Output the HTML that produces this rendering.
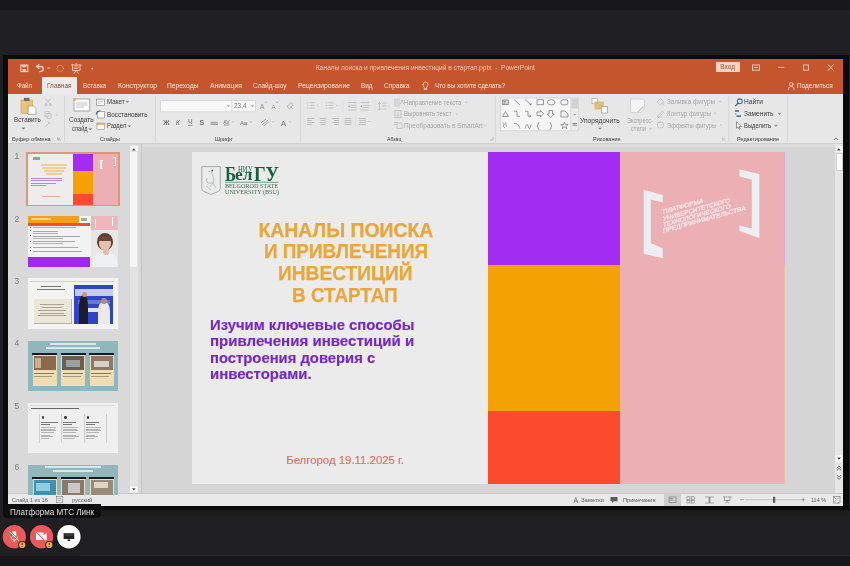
<!DOCTYPE html>
<html><head><meta charset="utf-8">
<style>
*{margin:0;padding:0;box-sizing:border-box}
html,body{width:850px;height:566px;overflow:hidden;background:#202024;font-family:"Liberation Sans",sans-serif;position:relative}
.a{position:absolute}
.t{position:absolute;white-space:pre;line-height:1}
svg{position:absolute;overflow:visible}
#root{position:absolute;left:0;top:0;width:850px;height:566px;overflow:hidden;filter:blur(0.5px)}
</style></head><body><div id="root">
<!-- top dark band -->
<div class="a" style="left:0;top:0;width:850px;height:9.5px;background:#18181c"></div>
<!-- window border -->
<div class="a" style="left:3px;top:54.5px;width:846px;height:456px;background:#0b0b0c"></div>
<div class="a" style="left:3px;top:510px;width:845px;height:6px;background:#1c1c1f"></div>
<!-- title bar + tabs -->
<div class="a" style="left:8px;top:59px;width:835px;height:35px;background:#c5552c"></div>
<!-- active tab -->
<div class="a" style="left:41.5px;top:77px;width:35.5px;height:17px;background:#ebebeb"></div>
<!-- ribbon body -->
<div class="a" style="left:8px;top:94px;width:835px;height:49px;background:#e7e7e7"></div>
<div class="a" style="left:8px;top:143px;width:835px;height:1px;background:#cfcfcf"></div>
<!-- main area -->
<div class="a" style="left:8px;top:144px;width:835px;height:350px;background:#d5d5d5"></div>
<!-- thumbnail panel -->
<div class="a" style="left:8px;top:144px;width:133px;height:350px;background:#d9d9d9"></div>
<div class="a" style="left:141px;top:144px;width:1px;height:350px;background:#c4c4c4"></div>
<div class="a" style="left:142px;top:144px;width:693px;height:2.5px;background:#dcdcdc"></div>
<!-- left scrollbar -->
<div class="a" style="left:129.5px;top:145px;width:8.5px;height:349px;background:#e3e3e3"></div>
<div class="a" style="left:130px;top:145.8px;width:7.5px;height:5.5px;background:#f4f4f4"></div>
<div class="a" style="left:130px;top:152px;width:7px;height:115px;background:#f5f5f5"></div>
<!-- right scrollbar -->
<div class="a" style="left:835px;top:144px;width:8px;height:350px;background:#e6e6e6"></div>
<div class="a" style="left:835.5px;top:145.5px;width:7px;height:6px;background:#f4f4f4"></div>
<div class="a" style="left:835.5px;top:152.5px;width:7px;height:18.5px;background:#fafafa;border:0.5px solid #d0d0d0"></div>
<!-- status bar -->
<div class="a" style="left:8px;top:493px;width:835px;height:1px;background:#c9c9c9"></div>
<div class="a" style="left:8px;top:494px;width:835px;height:12px;background:#e9e9e9"></div>


<!-- SLIDE -->
<div class="a" style="left:192px;top:152px;width:593px;height:331.5px;background:#ebebeb;overflow:hidden">
  <div class="a" style="left:296px;top:0;width:132px;height:113px;background:#a22cf1"></div>
  <div class="a" style="left:296px;top:113px;width:132px;height:146px;background:#f4a104"></div>
  <div class="a" style="left:296px;top:259px;width:132px;height:73px;background:#fc4a2e"></div>
  <div class="a" style="left:428px;top:0;width:164px;height:332px;background:#ecafb3"></div>
  <div class="a" style="left:592px;top:0;width:1px;height:113px;background:#d8aed6"></div>
  <div class="a" style="left:592px;top:113px;width:1px;height:219px;background:#eebfa8"></div>
</div>

<svg width="850" height="566" style="left:0;top:0" viewBox="0 0 850 566">
<g fill="none" stroke-linecap="square">
  <!-- title bar: save -->
  <rect x="20.8" y="65" width="7" height="6.6" stroke="#f5d0c2" stroke-width="1.1"/>
  <rect x="22.3" y="65" width="4" height="2.2" fill="#f5d0c2" stroke="none"/>
  <rect x="22.5" y="69" width="3.6" height="2.6" fill="#f5d0c2" stroke="none"/>
  <!-- undo -->
  <path d="M37,66.5 L40.5,66.5 Q43.5,66.8 43.3,69.2 Q43,71.5 40,71.6" stroke="#f5d0c2" stroke-width="1.3"/>
  <path d="M38.8,64.6 L36.6,66.6 L38.8,68.5" stroke="#f5d0c2" stroke-width="1.2"/>
  <path d="M47.8,68 h2" stroke="#f6cfc0" stroke-width="0.9"/>
  <!-- redo faded -->
  <circle cx="60.2" cy="68.4" r="3.2" stroke="#d98466" stroke-width="1"/>
  <!-- presentation -->
  <path d="M71.5,65 h9.5 M72.5,65 v5.5 h7.5 v-5.5 M76.2,70.5 l-2,2.8 M76.2,70.5 l2,2.8 M76.2,63.5 v1.5" stroke="#f5d0c2" stroke-width="0.9"/>
  <path d="M74,67 h4.5 M74,68.5 h3.5" stroke="#f6cfc0" stroke-width="0.7"/>
  <circle cx="92.2" cy="68.6" r="0.9" fill="#f6cfc0" stroke="none"/>
  <!-- window controls -->
  <rect x="752.5" y="65" width="7" height="5.2" stroke="#f5d0c2" stroke-width="0.9"/>
  <path d="M754.5,67.5 h3" stroke="#f5d0c2" stroke-width="0.9"/>
  <path d="M778.5,67.4 h5.3" stroke="#f5d0c2" stroke-width="0.9"/>
  <rect x="803.5" y="65" width="5" height="5.2" stroke="#f5d0c2" stroke-width="0.9"/>
  <path d="M828.3,64.8 l5,5.5 M833.3,64.8 l-5,5.5" stroke="#f5d0c2" stroke-width="0.9"/>
  <!-- lightbulb -->
  <path d="M423,84.5 a2.5,2.5 0 1 1 5,0 q0,1.5 -1.2,2.7 v1.3 h-2.6 v-1.3 q-1.2,-1.2 -1.2,-2.7 z M424.3,89.5 h2.4" stroke="#f5d0c2" stroke-width="0.8"/>
  <!-- person -->
  <circle cx="791.3" cy="84.3" r="1.8" stroke="#f5d0c2" stroke-width="0.9"/>
  <path d="M788.3,89.5 q0,-3.2 3,-3.2 q3,0 3,3.2" stroke="#f5d0c2" stroke-width="0.9"/>

  <!-- ribbon: paste -->
  <rect x="21" y="100" width="11.5" height="13.5" fill="#e8c37a" stroke="#c9a35a" stroke-width="0.6"/>
  <rect x="24" y="97.8" width="5.5" height="3.2" fill="#6f6f6f" stroke="none"/>
  <path d="M28.5,106 h5 l2.5,2.5 v6 h-7.5 z" fill="#fdfdfd" stroke="#8c8c8c" stroke-width="0.6"/>
  <path d="M22.2,128 l1.2,1.2 l1.2,-1.2 z" fill="#666" stroke="#666" stroke-width="0.4"/>
  <!-- cut copy painter faded -->
  <path d="M45.5,99 l5,5 M50.5,99 l-5,5" stroke="#b9b9b9" stroke-width="0.8"/>
  <circle cx="45.8" cy="105" r="1" stroke="#b9b9b9" stroke-width="0.7"/>
  <circle cx="50.2" cy="105" r="1" stroke="#b9b9b9" stroke-width="0.7"/>
  <rect x="45" y="111.5" width="4" height="5" stroke="#bdbdbd" stroke-width="0.7"/>
  <rect x="47" y="113.5" width="4" height="5" stroke="#bdbdbd" stroke-width="0.7"/>
  <path d="M56,115 h1.5" stroke="#bdbdbd" stroke-width="0.7"/>
  <path d="M45.5,126.5 l4,-4 M48,121.5 l2.5,2.5" stroke="#c2c2c2" stroke-width="1"/>
  <path d="M57.8,137.6 v2.4 h2.4 M58.6,139.2 l1.2,-1" stroke="#8a8a8a" stroke-width="0.6"/>
  <!-- separators -->
  <path d="M64.5,96 v45.5 M155.3,96 v45.5 M300.6,96 v45.5 M495.3,96 v45.5 M728.8,96 v45.5 M787.6,96 v45.5" stroke="#d2d2d2" stroke-width="0.8" stroke-linecap="butt"/>
  <!-- new slide -->
  <rect x="74" y="99" width="15.8" height="12" fill="#fafafa" stroke="#8a8a8a" stroke-width="0.7"/>
  <path d="M76.5,103 h10.5 M76.5,105 h10.5 M76.5,107 h7" stroke="#b0b0b0" stroke-width="0.7"/>
  <circle cx="74.6" cy="99.3" r="1.6" fill="#e6b45a" stroke="none"/>
  <path d="M89.2,128.8 l1.1,1.1 l1.1,-1.1 z" fill="#666" stroke="#666" stroke-width="0.4"/>
  <!-- layout / reset / section -->
  <rect x="96.5" y="99.2" width="8" height="6.2" fill="#fafafa" stroke="#7f7f7f" stroke-width="0.6"/>
  <path d="M98,101.5 h5 M98,103.3 h3" stroke="#a0a0a0" stroke-width="0.5"/>
  <path d="M126.3,101.6 l1,1 l1,-1 z" fill="#666" stroke="#666" stroke-width="0.4"/>
  <rect x="97.5" y="111.5" width="7" height="6.5" fill="#fafafa" stroke="#7f7f7f" stroke-width="0.6"/>
  <path d="M96.3,114 q0.5,-3 3.5,-3" stroke="#2e6fbf" stroke-width="1.1"/>
  <rect x="97" y="123" width="7.5" height="6.5" fill="#fafafa" stroke="#8f8f8f" stroke-width="0.6"/>
  <path d="M97,124 h7.5" stroke="#e49a4a" stroke-width="1.4"/>
  <path d="M128.4,125.9 l1,1 l1,-1 z" fill="#666" stroke="#666" stroke-width="0.4"/>
  <!-- font boxes -->
  <rect x="160.5" y="100.5" width="95" height="11.3" fill="#f8f8f8" stroke="#d0d0d0" stroke-width="0.7"/>
  <path d="M231.9,100.8 v10.7" stroke="#c4c4c4" stroke-width="0.6"/>
  <path d="M227.3,105.8 l1,1 l1,-1 z M251.3,105.8 l1,1 l1,-1 z" fill="#8a8a8a" stroke="#8a8a8a" stroke-width="0.4"/>
  <text x="259.7" y="109" font-size="7" fill="#8a8a8a" stroke="none" font-family="Liberation Sans">A</text>
  <text x="271.5" y="109" font-size="6" fill="#8a8a8a" stroke="none" font-family="Liberation Sans">A</text>
  <path d="M265.2,102.5 l0.8,-0.9 l0.8,0.9 M276.2,102 l0.7,0.8 l0.7,-0.8" stroke="#8a8a8a" stroke-width="0.5"/>
  <path d="M287.5,106.5 l3,-4 l2.5,2 l-3,4 z M290.5,107 l2,1.5" stroke="#a0a0a0" stroke-width="0.7"/>
  <!-- font row 2 -->
  <g font-family="Liberation Sans" fill="#707070" stroke="none" font-size="7" transform="translate(0,0.8)">
    <text x="163.3" y="124.3" font-weight="700">Ж</text>
    <text x="175.7" y="124.3" font-style="italic">К</text>
    <text x="187.9" y="123.6">Ч</text>
    <text x="199.5" y="124.3" font-weight="700">S</text>
    <text x="223.3" y="123.3" font-size="5">AV</text>
    <text x="240" y="124.3" font-size="6">Aa</text>
    <text x="280.8" y="124.8" font-size="8">A</text>
  </g>
  <path d="M188,125.4 h4.5 M210.8,122.3 h7 M224,125 h5.5" stroke="#7c7c7c" stroke-width="0.7" stroke-linecap="butt"/>
  <path d="M210.5,123.5 h7.5 v1.2 h-7.5 z" fill="#8a8a8a" stroke="none"/>
  <path d="M232.5,121.8 h1 M250.5,121.8 h1 M272.8,121.8 h1 M289.5,121.8 h1" stroke="#b0b0b0" stroke-width="0.7"/>
  <path d="M262.5,124.5 l5,-4 M261.5,122.5 l4,-3 M264,125.6 l4.5,-3.5" stroke="#9a9a9a" stroke-width="0.9"/>
  <path d="M270,118 v8" stroke="#d2d2d2" stroke-width="0.6"/>
  <!-- paragraph row 1 -->
<g transform="translate(0.5,3)">
  <g stroke="#b4b4b4" stroke-width="0.7" stroke-linecap="butt">
    <path d="M306.5,99.8 h1.2 M309,99.8 h5 M306.5,102.4 h1.2 M309,102.4 h5 M306.5,105 h1.2 M309,105 h5"/>
    <path d="M316.5,102.4 h1.2"/>
    <path d="M325.5,99.8 h1.2 M328,99.8 h5 M325.5,102.4 h1.2 M328,102.4 h5 M325.5,105 h1.2 M328,105 h5"/>
    <path d="M335.5,102.4 h1.2"/>
    <path d="M347.5,99.5 h8.5 M350,102.4 h6 M350,104.5 h6 M347.5,107 h8.5"/>
    <path d="M360,99.5 h8.5 M362.5,102.4 h6 M362.5,104.5 h6 M360,107 h8.5"/>
    <path d="M379,99.5 v7.5 M382,100 h4 M382,103 h4 M382,106 h4 M388,103 h1"/>
  </g>
  <path d="M348.2,102 l1.3,1.3 l-1.3,1.3 z M361.5,102 l-1.3,1.3 l1.3,1.3 z" fill="#6c8abf" stroke="none"/>
  <path d="M378,100.5 l1,-1.2 l1,1.2 M378,106 l1,1.2 l1,-1.2" stroke="#9a9a9a" stroke-width="0.6"/>
  <path d="M374.5,97 v11 M342.5,97 v11" stroke="#d8d8d8" stroke-width="0.6"/>
  </g>
  <!-- paragraph row 2 -->
  <g stroke="#b4b4b4" stroke-width="0.8" stroke-linecap="butt">
    <path d="M307,118.5 h7 M307,120.5 h5 M307,122.5 h7 M307,124.5 h5"/>
    <path d="M319.5,118.5 h7 M320.5,120.5 h5 M319.5,122.5 h7 M320.5,124.5 h5"/>
    <path d="M332,118.5 h7 M334,120.5 h5 M332,122.5 h7 M334,124.5 h5"/>
    <path d="M344.5,118.5 h7 M344.5,120.5 h7 M344.5,122.5 h7 M344.5,124.5 h7"/>
    <path d="M359,118.5 h7 M359,120.5 h7 M359,122.5 h7 M359,124.5 h7"/>
    <path d="M368.5,121.5 h1.2"/>
  </g>
  <path d="M355.5,116 v10" stroke="#d8d8d8" stroke-width="0.6"/>
  <!-- text direction etc icons -->
  <g stroke="#b8b8b8" stroke-width="0.7">
    <path d="M395,98.8 v7.5 M397,98.8 v7.5 M399,98.8 v7.5 M400.5,103.5 l1.5,-4 l1.5,4"/>
    <rect x="395" y="110.6" width="6" height="7.2"/>
    <path d="M398,112 v4.5 M396.8,115.3 l1.2,1.2 l1.2,-1.2"/>
    <rect x="397" y="123" width="5" height="5.5"/>
    <path d="M394.5,122.5 h3 M394.5,124.5 h2"/>
    <path d="M466,102.3 h1 M456.5,114.2 h1 M484.5,125.9 h1"/>
  </g>
  <!-- shapes gallery -->
  <rect x="500.5" y="98" width="70.5" height="32.8" fill="#f5f5f5" stroke="#d0d0d0" stroke-width="0.8"/>
  <rect x="571" y="98" width="7.3" height="32.8" fill="#ececec" stroke="#d0d0d0" stroke-width="0.6"/>
  <rect x="571.5" y="98.5" width="6.5" height="10" fill="#d2d2d2" stroke="none"/>
  <path d="M573.6,114.2 l1.1,1.3 l1.1,-1.3 z" fill="#555" stroke="none"/>
  <path d="M573,123.5 h3.5 M573,125.2 h3.5" stroke="#555" stroke-width="0.7"/>
  <g stroke="#6a6a6a" stroke-width="0.65" stroke-linecap="butt">
    <rect x="502.5" y="100" width="5.8" height="4.5" fill="#dadada"/>
    <path d="M503.5,101.5 h2.5 M503.5,103 h2"/>
    <path d="M514,99.5 l6,5.5"/>
    <path d="M525,99.5 l6,5.5 M529.5,104.8 h1.6 v-1.5"/>
    <rect x="537" y="99.8" width="6.5" height="5"/>
    <ellipse cx="551.2" cy="102.3" rx="3.8" ry="2.6"/>
    <rect x="561" y="99.8" width="6.8" height="5" rx="1.5"/>
    <path d="M502.5,116.5 l3,-5 l3,5 z"/>
    <path d="M514,111.2 h3 v5 h3"/>
    <path d="M525,111.2 h3 v5 h3 M529.6,115 l1.3,1.2 l-1.3,1.2"/>
    <path d="M537,112 h3.5 v-1.6 l3,3.3 l-3,3.3 v-1.6 h-3.5 z"/>
    <path d="M549,110.5 h3.5 v3.5 h1.7 l-3.5,3.5 l-3.5,-3.5 h1.8 z"/>
    <path d="M561,111 h4 l3,3 v3 h-7 z"/>
    <path d="M502.8,122.5 l1.5,1.5 l-1,2 l1.5,2 M505.5,122.5 l1,4"/>
    <path d="M514,123.5 q4,-1 6,5"/>
    <path d="M525,128.5 q2,-7 3.2,-2 q1.2,5 3,-2"/>
    <path d="M539.5,122.5 q-1.5,0 -1.5,1.5 v1.2 l-1,0.8 l1,0.8 v1.2 q0,1.5 1.5,1.5"/>
    <path d="M549.5,122.5 q1.5,0 1.5,1.5 v1.2 l1,0.8 l-1,0.8 v1.2 q0,1.5 -1.5,1.5"/>
    <path d="M564.5,122 l1.1,2.5 h2.6 l-2.1,1.6 l0.8,2.6 l-2.4,-1.6 l-2.4,1.6 l0.8,-2.6 l-2.1,-1.6 h2.6 z"/>
  </g>
  <!-- arrange -->
  <rect x="592" y="98.3" width="5.5" height="5.5" fill="#fafafa" stroke="#9a9a9a" stroke-width="0.6"/>
  <rect x="594.5" y="101.5" width="9.5" height="8" fill="#dcb56a" stroke="none" opacity="0.85"/>
  <rect x="601.5" y="106.5" width="6" height="6.5" fill="#fafafa" stroke="#8a8a8a" stroke-width="0.6"/>
  <path d="M599,128.3 l1,1 l1,-1 z" fill="#666" stroke="#666" stroke-width="0.4"/>
  <!-- quick styles faded -->
  <path d="M631,99 h11.5 q2,0 2,2 v7 l-3.5,4.5 h-10 z" fill="#f4f4f4" stroke="#c8c8c8" stroke-width="0.7"/>
  <path d="M638,112 l5,-5" stroke="#c0c0c0" stroke-width="1.2"/>
  <path d="M649.5,128.8 l1,1 l1,-1 z" fill="#bbb" stroke="#bbb" stroke-width="0.4"/>
  <!-- shape fill/outline/effects faded -->
  <g stroke="#bdbdbd" stroke-width="0.8">
    <path d="M657.5,101.5 l3,-3 l3,3 l-3,3 z M663,102.5 v2.5"/>
    <path d="M657.5,116 l5,-5 l1.2,1.2 l-5,5 z M657.5,117 h4"/>
    <rect x="657.5" y="122.2" width="6" height="5.5" rx="2"/>
    <path d="M719.5,101.4 h1 M714.5,113.2 h1 M720.5,125 h1"/>
    <path d="M722.4,137.6 v2.4 h2.4 M723.2,139.2 l1.2,-1"/>
  </g>
  <!-- editing -->
  <circle cx="739.8" cy="101.3" r="2.4" stroke="#2f6ab7" stroke-width="1.1"/>
  <path d="M738,103.2 l-2.4,2.5" stroke="#2f6ab7" stroke-width="1.3"/>
  <g stroke="none">
    <rect x="735" y="110.2" width="4" height="1.6" fill="#666"/>
    <rect x="736.5" y="115.3" width="4.5" height="1.6" fill="#2f6ab7"/>
    <path d="M734.8,113.5 h2 l-1,1.2 z" fill="#777"/>
  </g>
  <path d="M778.5,113.6 l1,1 l1,-1 z M775,125.4 l1,1 l1,-1 z" fill="#666" stroke="#666" stroke-width="0.4"/>
  <path d="M736.5,122.3 v6 l1.5,-1.4 l1.3,2.6 l0.9,-0.5 l-1.2,-2.4 h2 z" fill="#fafafa" stroke="#555" stroke-width="0.6"/>
  <path d="M834.2,139.6 l1.8,-1.8 l1.8,1.8" stroke="#666" stroke-width="0.8"/>
  <path d="M396.8,137.6 v0 M493,137.6 v2.4 h-2.4" stroke="#9a9a9a" stroke-width="0.6"/>

  <!-- left scrollbar arrows -->
  <path d="M132,150.5 l1.8,-2.2 l1.8,2.2 z" fill="#444" stroke="none"/>
  <rect x="130" y="486.5" width="7.5" height="5.5" fill="#fafafa" stroke="none"/>
  <path d="M132,488.3 l1.8,2.2 l1.8,-2.2 z" fill="#444" stroke="none"/>
  <!-- right scrollbar -->
  <path d="M837,150.5 l1.8,-2.2 l1.8,2.2 z" fill="#444" stroke="none"/>
  <rect x="835.5" y="455.5" width="7" height="6" fill="#fafafa"/>
  <path d="M837.2,457.5 l1.8,2.2 l1.8,-2.2 z" fill="#444"/>
  <path d="M837.2,467.8 l1.8,-1.6 l1.8,1.6 M837.2,470 l1.8,-1.6 l1.8,1.6 M837.2,475.5 l1.8,1.6 l1.8,-1.6 M837.2,477.7 l1.8,1.6 l1.8,-1.6" fill="none" stroke="#444" stroke-width="0.7"/>
  <!-- status bar icons -->
  <rect x="56.3" y="496.3" width="6.5" height="6.5" stroke="#7a7a7a" stroke-width="0.6"/>
  <path d="M58,498.5 h3 M58,500.5 h3" stroke="#7a7a7a" stroke-width="0.5"/>
  <path d="M574,502.5 l1.8,-5 l1.8,5 M574.6,501 h2.4" stroke="#6a6a6a" stroke-width="0.7"/>
  <path d="M610.5,497 h7 v4.2 h-3.5 l-2,1.8 v-1.8 h-1.5 z" fill="#5a5a5a" stroke="none"/>
  <rect x="664" y="494" width="17" height="11.8" fill="#cdcdcd" stroke="none"/>
  <g stroke="#777" stroke-width="0.6">
    <rect x="669" y="497" width="7" height="5.5"/>
    <path d="M670,498.5 h2.5 M670,500 h2.5"/>
    <rect x="687" y="496.8" width="3" height="2.5"/><rect x="691.5" y="496.8" width="3" height="2.5"/>
    <rect x="687" y="500.5" width="3" height="2.5"/><rect x="691.5" y="500.5" width="3" height="2.5"/>
    <path d="M705.5,497 h3.5 v6 h-3.5 M713.5,497 h-3.5 v6 h3.5 M709.5,497 v6"/>
    <path d="M723.5,497 h7.5 M724.5,497 v3.5 h5.5 v-3.5 M727.2,500.5 l-1.2,2.5 M727.2,500.5 l1.2,2.5"/>
    <path d="M740.5,499.8 h3 M801.5,499.8 h3.5 M803.2,498 v3.5"/>
    <rect x="833.5" y="496.5" width="6.5" height="6.5"/>
    <path d="M834.5,497.5 l1.5,1.5 M839,497.5 l-1.5,1.5 M834.5,502 l1.5,-1.5 M839,502 l-1.5,1.5"/>
  </g>
  <path d="M746,499.8 h54.5" stroke="#a8a8a8" stroke-width="0.6"/>
  <rect x="773" y="496.8" width="2.2" height="6" fill="#5a5a5a" stroke="none"/>
</g>
</svg>
<!-- Вход button -->
<div class="a" style="left:715.5px;top:62.3px;width:24.2px;height:9.7px;background:#f6d3c4"></div>
<!-- THUMB 1 -->
<div class="a" style="left:26.2px;top:152.3px;width:93.6px;height:54px;background:#df957a"></div>
<div class="a" style="left:28px;top:154px;width:90px;height:50.5px;background:#ededed;overflow:hidden">
  <div class="a" style="left:45.4px;top:0;width:19.7px;height:17.2px;background:#a22cf1"></div>
  <div class="a" style="left:45.4px;top:17.2px;width:19.7px;height:22.8px;background:#f4a104"></div>
  <div class="a" style="left:45.4px;top:40px;width:19.7px;height:10.5px;background:#fc4a2e"></div>
  <div class="a" style="left:65.1px;top:0;width:25px;height:50.5px;background:#ecafb3"></div>
  <div class="a" style="left:72px;top:6px;width:1.5px;height:9px;background:#f4f4f4"></div>
  <div class="a" style="left:72px;top:6px;width:3px;height:1.2px;background:#f4f4f4"></div>
  <div class="a" style="left:72px;top:14px;width:3px;height:1.2px;background:#f4f4f4"></div>
  <div class="a" style="left:86.5px;top:3px;width:1.5px;height:9px;background:#f4f4f4"></div>
  <div class="a" style="left:85px;top:3px;width:3px;height:1.2px;background:#f4f4f4"></div>
  <div class="a" style="left:85px;top:11px;width:3px;height:1.2px;background:#f4f4f4"></div>
  <div class="a" style="left:5px;top:2.5px;width:7px;height:3px;background:#5a8a70;opacity:.7"></div>
  <div class="a" style="left:13px;top:10px;width:26px;height:1.5px;background:#f2cf90"></div>
  <div class="a" style="left:14px;top:13px;width:24px;height:1.5px;background:#f2cf90"></div>
  <div class="a" style="left:16px;top:16px;width:20px;height:1.5px;background:#f2cf90"></div>
  <div class="a" style="left:18px;top:19px;width:16px;height:1.5px;background:#f2cf90"></div>
  <div class="a" style="left:2.5px;top:23.5px;width:31px;height:1.3px;background:#b58ae6"></div>
  <div class="a" style="left:2.5px;top:26px;width:31px;height:1.3px;background:#b58ae6"></div>
  <div class="a" style="left:2.5px;top:28.5px;width:25px;height:1.3px;background:#b58ae6"></div>
  <div class="a" style="left:2.5px;top:31px;width:15px;height:1.3px;background:#b58ae6"></div>
  <div class="a" style="left:14px;top:42px;width:18px;height:1px;background:#e8b0a0"></div>
</div>
<!-- THUMB 2 -->
<div class="a" style="left:28px;top:216px;width:90px;height:50.5px;background:#f2f2f2;overflow:hidden">
  <div class="a" style="left:0;top:0;width:51px;height:6.5px;background:#f2a019"></div>
  <div class="a" style="left:2.5px;top:2px;width:20px;height:2.2px;background:#fbe0b8;opacity:.75"></div>
  <div class="a" style="left:51px;top:0;width:11px;height:6.5px;background:#f4f4f4"></div>
  <div class="a" style="left:53px;top:2px;width:6px;height:2.5px;background:#9ab0a4"></div>
  <div class="a" style="left:0;top:6.5px;width:62px;height:3px;background:#f0502e"></div>
  <div class="a" style="left:62.5px;top:0;width:27.5px;height:14px;background:#efb6bb"></div>
  <div class="a" style="left:66.5px;top:2.5px;width:1.2px;height:9px;background:#fafafa"></div>
  <div class="a" style="left:83.5px;top:1px;width:1.2px;height:9px;background:#fafafa"></div>
  <div class="a" style="left:62.5px;top:14px;width:27.5px;height:36.5px;background:#e9e7e6"></div>
  <div class="a" style="left:68.6px;top:16.7px;width:16px;height:17px;border-radius:50% 50% 45% 45%;background:#5e4032"></div>
  <div class="a" style="left:71px;top:21px;width:12.4px;height:13px;border-radius:45% 45% 50% 50%;background:#e6c2ac"></div>
  <div class="a" style="left:71px;top:21px;width:12.4px;height:3.5px;border-radius:45% 45% 0 0;background:#6a4838"></div>
  <div class="a" style="left:65px;top:37px;width:24px;height:14px;border-radius:45% 45% 0 0;background:#eef0f4"></div>
  <div class="a" style="left:75px;top:33px;width:6px;height:6px;border-radius:40%;background:#e2bca6"></div>
  <g></g>
  <div class="a" style="left:2.3px;top:11px;width:1.2px;height:1.2px;background:#666"></div>
  <div class="a" style="left:5px;top:11.3px;width:43px;height:.8px;background:#a8adb8"></div>
  <div class="a" style="left:2.3px;top:14.2px;width:1.2px;height:1.2px;background:#666"></div>
  <div class="a" style="left:5px;top:14.5px;width:25px;height:.8px;background:#a8a8a8"></div>
  <div class="a" style="left:5px;top:16.5px;width:25px;height:.8px;background:#b4b4b4"></div>
  <div class="a" style="left:2.3px;top:19.2px;width:1.2px;height:1.2px;background:#666"></div>
  <div class="a" style="left:5px;top:19.5px;width:47px;height:.8px;background:#a8a8a8"></div>
  <div class="a" style="left:5px;top:21.5px;width:30px;height:.8px;background:#b4b4b4"></div>
  <div class="a" style="left:2.3px;top:24.8px;width:1.2px;height:1.2px;background:#666"></div>
  <div class="a" style="left:5px;top:25px;width:42px;height:.8px;background:#a8a8a8"></div>
  <div class="a" style="left:5px;top:27px;width:30px;height:.8px;background:#b4b4b4"></div>
  <div class="a" style="left:2.3px;top:30.7px;width:1.2px;height:1.2px;background:#666"></div>
  <div class="a" style="left:5px;top:31px;width:45px;height:.8px;background:#a8a8a8"></div>
  <div class="a" style="left:2.3px;top:34.2px;width:1.2px;height:1.2px;background:#666"></div>
  <div class="a" style="left:5px;top:34.5px;width:49px;height:.8px;background:#a8a8a8"></div>
  <div class="a" style="left:0;top:40.5px;width:62px;height:10px;background:#a029f0"></div>
</div>
<!-- THUMB 3 -->
<div class="a" style="left:28px;top:278.3px;width:90px;height:50.5px;background:#f3f3f1;overflow:hidden">
  <div class="a" style="left:2px;top:2.5px;width:84px;height:.8px;background:#d0d0d0"></div>
  <div class="a" style="left:13px;top:8px;width:20px;height:1px;background:#777"></div>
  <div class="a" style="left:9px;top:10.8px;width:28px;height:1px;background:#777"></div>
  <div class="a" style="left:5.6px;top:20.9px;width:38px;height:25px;background:#b8b4a2"></div>
  <div class="a" style="left:5.6px;top:20.9px;width:37px;height:24px;background:#ebe7d7"></div>
  <div class="a" style="left:12px;top:26px;width:24px;height:1px;background:#aaa59a"></div>
  <div class="a" style="left:14px;top:28.5px;width:20px;height:1px;background:#aaa59a"></div>
  <div class="a" style="left:10px;top:32px;width:28px;height:1px;background:#aaa59a"></div>
  <div class="a" style="left:12px;top:34.5px;width:24px;height:1px;background:#aaa59a"></div>
  <div class="a" style="left:10px;top:37px;width:28px;height:1px;background:#aaa59a"></div>
  <div class="a" style="left:46.4px;top:6.7px;width:39px;height:39px;background:#2f45c9;overflow:hidden">
    <div class="a" style="left:1px;top:4px;width:38px;height:7px;background:#dfe3f7;opacity:.85"></div>
    <div class="a" style="left:4px;top:15px;width:32px;height:4px;background:#8c9ce0;opacity:.6"></div>
    <div class="a" style="left:5px;top:10px;width:9px;height:30px;border-radius:40% 40% 0 0;background:#1c1c2a"></div>
    <div class="a" style="left:8px;top:7px;width:5px;height:5px;border-radius:50%;background:#c89a80"></div>
    <div class="a" style="left:24px;top:17px;width:12px;height:22px;border-radius:40% 40% 0 0;background:#ece8e6"></div>
    <div class="a" style="left:27px;top:13px;width:6px;height:6px;border-radius:50%;background:#b08a70"></div>
    <div class="a" style="left:14px;top:23px;width:14px;height:4px;background:#e0e4f0"></div>
  </div>
</div>
<!-- THUMB 4 -->
<div class="a" style="left:28px;top:340.5px;width:90px;height:50.5px;background:#91b6bb;overflow:hidden">
  <div class="a" style="left:22px;top:2.6px;width:46px;height:2px;background:#d8e8ea"></div>
  <div class="a" style="left:18px;top:6px;width:54px;height:2px;background:#d8e8ea"></div>
  <div class="a" style="left:4px;top:12px;width:25px;height:2px;background:#1a1a1a"></div>
  <div class="a" style="left:32.5px;top:12px;width:25px;height:2px;background:#1a1a1a"></div>
  <div class="a" style="left:61px;top:12px;width:25px;height:2px;background:#1a1a1a"></div>
  <div class="a" style="left:4.5px;top:14px;width:24px;height:31px;background:#eedcb2"></div>
  <div class="a" style="left:33px;top:14px;width:24px;height:31px;background:#eedcb2"></div>
  <div class="a" style="left:61.5px;top:14px;width:24px;height:31px;background:#eedcb2"></div>
  <div class="a" style="left:5.5px;top:15px;width:22px;height:14px;background:#8a6a4a"></div>
  <div class="a" style="left:34px;top:15px;width:22px;height:14px;background:#6a5e50"></div>
  <div class="a" style="left:62.5px;top:15px;width:22px;height:14px;background:#8c7a66"></div>
  <div class="a" style="left:7px;top:17px;width:6px;height:10px;background:#c8b090"></div>
  <div class="a" style="left:38px;top:19px;width:14px;height:7px;background:#9aa0a0"></div>
  <div class="a" style="left:66px;top:20px;width:15px;height:6px;background:#d8d0c8"></div>
  <div class="a" style="left:6px;top:32px;width:20px;height:1px;background:#8a7a5a"></div>
  <div class="a" style="left:6px;top:35px;width:18px;height:1px;background:#a89a7a"></div>
  <div class="a" style="left:35px;top:32px;width:20px;height:1px;background:#8a7a5a"></div>
  <div class="a" style="left:35px;top:35px;width:18px;height:1px;background:#a89a7a"></div>
  <div class="a" style="left:63px;top:32px;width:20px;height:1px;background:#8a7a5a"></div>
  <div class="a" style="left:63px;top:35px;width:18px;height:1px;background:#a89a7a"></div>
</div>
<!-- THUMB 5 -->
<div class="a" style="left:28px;top:402.7px;width:90px;height:50.5px;background:#efefef;overflow:hidden">
  <div class="a" style="left:2px;top:2.3px;width:84px;height:.7px;background:#dadada"></div>
  <div class="a" style="left:3px;top:5.3px;width:48px;height:1.1px;background:#666"></div>
  <div class="a" style="left:10.5px;top:11.8px;width:.7px;height:28.5px;background:#cfcfcf"></div>
  <div class="a" style="left:32.8px;top:11.8px;width:.7px;height:28.5px;background:#cfcfcf"></div>
  <div class="a" style="left:55.6px;top:11.8px;width:.7px;height:28.5px;background:#cfcfcf"></div>
  <div class="a" style="left:77.9px;top:11.8px;width:.7px;height:28.5px;background:#cfcfcf"></div>
  <div class="a" style="left:13.5px;top:13.5px;width:2.8px;height:2.6px;border-radius:50%;background:#3a3a3a"></div>
  <div class="a" style="left:13.0px;top:19.2px;width:17px;height:1px;background:#777"></div>
  <div class="a" style="left:13.0px;top:21.3px;width:9px;height:1px;background:#777"></div>
  <div class="a" style="left:13.0px;top:24.8px;width:15px;height:.7px;background:#b4b4b4"></div>
  <div class="a" style="left:13.0px;top:26.3px;width:14px;height:.7px;background:#b4b4b4"></div>
  <div class="a" style="left:13.0px;top:27.8px;width:15px;height:.7px;background:#b4b4b4"></div>
  <div class="a" style="left:13.0px;top:29.3px;width:13px;height:.7px;background:#b4b4b4"></div>
  <div class="a" style="left:13.0px;top:32.0px;width:9px;height:.7px;background:#b4b4b4"></div>
  <div class="a" style="left:13.0px;top:33.5px;width:12px;height:.7px;background:#b4b4b4"></div>
  <div class="a" style="left:13.0px;top:35.0px;width:8px;height:.7px;background:#b4b4b4"></div>
  <div class="a" style="left:35.8px;top:13.5px;width:2.8px;height:2.6px;border-radius:50%;background:#3a3a3a"></div>
  <div class="a" style="left:35.3px;top:19.2px;width:13px;height:1px;background:#777"></div>
  <div class="a" style="left:35.3px;top:21.3px;width:9px;height:1px;background:#777"></div>
  <div class="a" style="left:35.3px;top:24.8px;width:15px;height:.7px;background:#b4b4b4"></div>
  <div class="a" style="left:35.3px;top:26.3px;width:14px;height:.7px;background:#b4b4b4"></div>
  <div class="a" style="left:35.3px;top:27.8px;width:15px;height:.7px;background:#b4b4b4"></div>
  <div class="a" style="left:35.3px;top:29.3px;width:13px;height:.7px;background:#b4b4b4"></div>
  <div class="a" style="left:35.3px;top:32.0px;width:13px;height:.7px;background:#b4b4b4"></div>
  <div class="a" style="left:35.3px;top:33.5px;width:16px;height:.7px;background:#b4b4b4"></div>
  <div class="a" style="left:35.3px;top:35.0px;width:12px;height:.7px;background:#b4b4b4"></div>
  <div class="a" style="left:58.6px;top:13.5px;width:2.8px;height:2.6px;border-radius:50%;background:#3a3a3a"></div>
  <div class="a" style="left:58.1px;top:19.2px;width:13px;height:1px;background:#777"></div>
  <div class="a" style="left:58.1px;top:21.3px;width:9px;height:1px;background:#777"></div>
  <div class="a" style="left:58.1px;top:24.8px;width:15px;height:.7px;background:#b4b4b4"></div>
  <div class="a" style="left:58.1px;top:26.3px;width:14px;height:.7px;background:#b4b4b4"></div>
  <div class="a" style="left:58.1px;top:27.8px;width:15px;height:.7px;background:#b4b4b4"></div>
  <div class="a" style="left:58.1px;top:29.3px;width:13px;height:.7px;background:#b4b4b4"></div>
  <div class="a" style="left:58.1px;top:32.0px;width:9px;height:.7px;background:#b4b4b4"></div>
  <div class="a" style="left:58.1px;top:33.5px;width:12px;height:.7px;background:#b4b4b4"></div>
  <div class="a" style="left:58.1px;top:35.0px;width:8px;height:.7px;background:#b4b4b4"></div>
</div>
<!-- THUMB 6 -->
<div class="a" style="left:28px;top:464.8px;width:90px;height:30px;background:#91b6bb;overflow:hidden">
  <div class="a" style="left:17px;top:1.6px;width:56px;height:2px;background:#d8e8ea"></div>
  <div class="a" style="left:25px;top:5px;width:40px;height:2px;background:#d8e8ea"></div>
  <div class="a" style="left:4px;top:12px;width:25px;height:2px;background:#1a1a1a"></div>
  <div class="a" style="left:32.5px;top:12px;width:25px;height:2px;background:#1a1a1a"></div>
  <div class="a" style="left:61px;top:12px;width:25px;height:2px;background:#1a1a1a"></div>
  <div class="a" style="left:4.5px;top:14px;width:24px;height:16px;background:#eedcb2"></div>
  <div class="a" style="left:33px;top:14px;width:24px;height:16px;background:#eedcb2"></div>
  <div class="a" style="left:61.5px;top:14px;width:24px;height:16px;background:#eedcb2"></div>
  <div class="a" style="left:5.5px;top:15px;width:22px;height:15px;background:#3f8fb0"></div>
  <div class="a" style="left:34px;top:15px;width:22px;height:15px;background:#8a7a6a"></div>
  <div class="a" style="left:62.5px;top:15px;width:22px;height:15px;background:#9a8a78"></div>
  <div class="a" style="left:8px;top:18px;width:14px;height:8px;background:#8ad0e0"></div>
  <div class="a" style="left:40px;top:18px;width:12px;height:10px;background:#c8c8c8"></div>
  <div class="a" style="left:66px;top:17px;width:14px;height:6px;background:#ddd4c4"></div>
</div>
<!-- bracket graphic on slide -->
<svg width="850" height="566" style="left:0;top:0" viewBox="0 0 850 566">
  <polygon points="643.7,189.8 662.8,195 662.8,202.5 650.8,199.5 650.8,243 662.8,248.4 662.8,258.2 643.7,253.7" fill="#eceef0"/>
  <polygon points="739.3,169.3 759.3,174 759.3,238.2 739.3,230.7 739.3,225.4 751.8,228.4 751.8,179.5 739.3,176.5" fill="#eceef0"/>
  <!-- shield -->
  <path d="M201.8,166.6 L220.3,166.6 L220.3,188.5 Q220.3,191 217,192 L211,194.4 L205,192 Q201.8,191 201.8,188.5 Z" fill="none" stroke="#9aa39e" stroke-width="0.9"/>
  <path d="M208,172 q3,-2 4,1 l1,4 q2,3 0,6 l-3,4 M207,178 q-2,3 1,5 q3,1 5,-1 M206,186 l5,4 M213,183 l3,5" fill="none" stroke="#a9b0ac" stroke-width="0.7"/>
  <circle cx="212.3" cy="170.5" r="0.9" fill="#555"/>
  <line x1="225" y1="182.3" x2="278.5" y2="182.3" stroke="#4f7a62" stroke-width="0.7"/>
</svg>
<div class="t" style="left:0;top:0;transform-origin:0 0;"></div>

<!-- label -->
<div class="a" style="left:3px;top:504px;width:97.5px;height:13.8px;background:#0e0e10;border-radius:0 0 4px 4px"></div>
<!-- buttons -->
<svg width="850" height="566" style="left:0;top:0" viewBox="0 0 850 566">
  <circle cx="14.3" cy="536.7" r="12.6" fill="#19191c"/>
  <circle cx="41.6" cy="536.7" r="12.6" fill="#19191c"/>
  <circle cx="68.9" cy="536.7" r="12.6" fill="#19191c"/>
  <circle cx="14.3" cy="536.7" r="11.7" fill="#ea5a5a"/>
  <circle cx="41.6" cy="536.7" r="11.7" fill="#ea5a5a"/>
  <circle cx="68.9" cy="536.7" r="11.7" fill="#ffffff"/>
  <!-- mic off -->
  <rect x="12.3" y="531" width="4" height="6.5" rx="2" fill="#ffffff" opacity="0.95"/>
  <path d="M10.8,536.5 q0,3.5 3.5,3.5 q3.5,0 3.5,-3.5 M14.3,540 v2" stroke="#ffffff" stroke-width="0.9" fill="none"/>
  <path d="M9.5,531.5 l9.5,9.5" stroke="#ea5a5a" stroke-width="2"/>
  <path d="M9.5,531.5 l9.5,9.5" stroke="#ffffff" stroke-width="0.9"/>
  <!-- camera off -->
  <path d="M36,532.5 h7.5 v7.5 h-7.5 z M43.5,535 l3.2,-2 v7.5 l-3.2,-2 z" fill="#ffffff"/>
  <path d="M36,531.5 l9.5,9.5" stroke="#ea5a5a" stroke-width="1.6"/>
  <path d="M36.5,531.5 l9,9" stroke="#ffffff" stroke-width="0.7"/>
  <!-- badges -->
  <circle cx="22.2" cy="544.9" r="4" fill="#1b1b1e"/>
  <circle cx="22.2" cy="544.9" r="3.1" fill="#f2b134"/>
  <path d="M22.2,542.6 v2.6 M22.2,546.4 v0.8" stroke="#3a2a10" stroke-width="1"/>
  <circle cx="49.3" cy="544.9" r="4" fill="#1b1b1e"/>
  <circle cx="49.3" cy="544.9" r="3.1" fill="#f2b134"/>
  <path d="M49.3,542.6 v2.6 M49.3,546.4 v0.8" stroke="#3a2a10" stroke-width="1"/>
  <!-- screen icon -->
  <rect x="63.6" y="533.2" width="10.6" height="5.8" fill="#222"/>
  <path d="M64.5,535 h8.8" stroke="#777" stroke-width="0.5"/>
  <rect x="67.6" y="539.4" width="2.6" height="1.6" fill="#222"/>
</svg>
<!-- bottom band -->
<div class="a" style="left:0;top:556px;width:850px;height:10px;background:#17171b"></div>
<div class="a" style="left:80px;top:555px;width:770px;height:1px;background:#2c2729"></div>
<div class="t" style="left:316.00px;top:64.94px;font-size:6.60px;font-weight:400;color:#f1c7b8;font-family:'Liberation Sans', sans-serif;">Каналы поиска и привлечения инвестиций в стартап.pptx  -  PowerPoint</div>
<div class="t" style="left:720.30px;top:64.14px;font-size:6.60px;font-weight:400;color:#a4553c;font-family:'Liberation Sans', sans-serif;">Вход</div>
<div class="t" style="left:17.00px;top:83.03px;font-size:6.80px;font-weight:400;color:#fbe6de;font-family:'Liberation Sans', sans-serif;transform:scaleX(0.8972);transform-origin:0 0;">Файл</div>
<div class="t" style="left:46.80px;top:83.03px;font-size:6.80px;font-weight:400;color:#8a4e3c;font-family:'Liberation Sans', sans-serif;transform:scaleX(0.9466);transform-origin:0 0;">Главная</div>
<div class="t" style="left:83.00px;top:83.03px;font-size:6.80px;font-weight:400;color:#fbe6de;font-family:'Liberation Sans', sans-serif;transform:scaleX(0.9100);transform-origin:0 0;">Вставка</div>
<div class="t" style="left:117.60px;top:83.03px;font-size:6.80px;font-weight:400;color:#fbe6de;font-family:'Liberation Sans', sans-serif;transform:scaleX(1.0059);transform-origin:0 0;">Конструктор</div>
<div class="t" style="left:167.00px;top:83.03px;font-size:6.80px;font-weight:400;color:#fbe6de;font-family:'Liberation Sans', sans-serif;transform:scaleX(0.9845);transform-origin:0 0;">Переходы</div>
<div class="t" style="left:210.00px;top:83.03px;font-size:6.80px;font-weight:400;color:#fbe6de;font-family:'Liberation Sans', sans-serif;">Анимация</div>
<div class="t" style="left:253.00px;top:83.03px;font-size:6.80px;font-weight:400;color:#fbe6de;font-family:'Liberation Sans', sans-serif;transform:scaleX(0.9531);transform-origin:0 0;">Слайд-шоу</div>
<div class="t" style="left:297.50px;top:83.03px;font-size:6.80px;font-weight:400;color:#fbe6de;font-family:'Liberation Sans', sans-serif;transform:scaleX(0.9884);transform-origin:0 0;">Рецензирование</div>
<div class="t" style="left:361.00px;top:83.03px;font-size:6.80px;font-weight:400;color:#fbe6de;font-family:'Liberation Sans', sans-serif;transform:scaleX(0.9266);transform-origin:0 0;">Вид</div>
<div class="t" style="left:384.00px;top:83.03px;font-size:6.80px;font-weight:400;color:#fbe6de;font-family:'Liberation Sans', sans-serif;transform:scaleX(0.9522);transform-origin:0 0;">Справка</div>
<div class="t" style="left:435.00px;top:83.03px;font-size:6.80px;font-weight:400;color:#fbe6de;font-family:'Liberation Sans', sans-serif;transform:scaleX(0.9312);transform-origin:0 0;">Что вы хотите сделать?</div>
<div class="t" style="left:797.00px;top:83.43px;font-size:6.80px;font-weight:400;color:#fdeae2;font-family:'Liberation Sans', sans-serif;transform:scaleX(0.9507);transform-origin:0 0;">Поделиться</div>
<div class="t" style="left:13.60px;top:117.14px;font-size:6.60px;font-weight:400;color:#3c3c3c;font-family:'Liberation Sans', sans-serif;transform:scaleX(0.9544);transform-origin:0 0;">Вставить</div>
<div class="t" style="left:12.40px;top:136.06px;font-size:6.00px;font-weight:400;color:#383838;font-family:'Liberation Sans', sans-serif;transform:scaleX(0.9517);transform-origin:0 0;">Буфер обмена</div>
<div class="t" style="left:68.90px;top:117.14px;font-size:6.60px;font-weight:400;color:#3c3c3c;font-family:'Liberation Sans', sans-serif;transform:scaleX(0.9848);transform-origin:0 0;">Создать</div>
<div class="t" style="left:72.00px;top:126.14px;font-size:6.60px;font-weight:400;color:#3c3c3c;font-family:'Liberation Sans', sans-serif;transform:scaleX(0.8442);transform-origin:0 0;">слайд</div>
<div class="t" style="left:106.50px;top:99.14px;font-size:6.60px;font-weight:400;color:#3c3c3c;font-family:'Liberation Sans', sans-serif;transform:scaleX(0.9369);transform-origin:0 0;">Макет</div>
<div class="t" style="left:106.80px;top:111.54px;font-size:6.60px;font-weight:400;color:#3c3c3c;font-family:'Liberation Sans', sans-serif;transform:scaleX(0.9607);transform-origin:0 0;">Восстановить</div>
<div class="t" style="left:106.80px;top:123.34px;font-size:6.60px;font-weight:400;color:#3c3c3c;font-family:'Liberation Sans', sans-serif;transform:scaleX(0.8801);transform-origin:0 0;">Раздел</div>
<div class="t" style="left:99.80px;top:136.06px;font-size:6.00px;font-weight:400;color:#383838;font-family:'Liberation Sans', sans-serif;transform:scaleX(0.8820);transform-origin:0 0;">Слайды</div>
<div class="t" style="left:233.50px;top:103.14px;font-size:6.60px;font-weight:400;color:#777;font-family:'Liberation Sans', sans-serif;transform:scaleX(0.9730);transform-origin:0 0;">23,4</div>
<div class="t" style="left:215.00px;top:135.66px;font-size:6.00px;font-weight:400;color:#383838;font-family:'Liberation Sans', sans-serif;transform:scaleX(0.9118);transform-origin:0 0;">Шрифт</div>
<div class="t" style="left:403.50px;top:99.54px;font-size:6.60px;font-weight:400;color:#a6a6a6;font-family:'Liberation Sans', sans-serif;transform:scaleX(0.9190);transform-origin:0 0;">Направление текста</div>
<div class="t" style="left:403.50px;top:111.34px;font-size:6.60px;font-weight:400;color:#a6a6a6;font-family:'Liberation Sans', sans-serif;transform:scaleX(0.9239);transform-origin:0 0;">Выровнять текст</div>
<div class="t" style="left:403.50px;top:123.04px;font-size:6.60px;font-weight:400;color:#a6a6a6;font-family:'Liberation Sans', sans-serif;transform:scaleX(0.9868);transform-origin:0 0;">Преобразовать в SmartArt</div>
<div class="t" style="left:386.60px;top:136.26px;font-size:6.00px;font-weight:400;color:#383838;font-family:'Liberation Sans', sans-serif;transform:scaleX(0.8555);transform-origin:0 0;">Абзац</div>
<div class="t" style="left:580.00px;top:117.64px;font-size:6.60px;font-weight:400;color:#3c3c3c;font-family:'Liberation Sans', sans-serif;transform:scaleX(1.0108);transform-origin:0 0;">Упорядочить</div>
<div class="t" style="left:627.00px;top:117.64px;font-size:6.60px;font-weight:400;color:#a6a6a6;font-family:'Liberation Sans', sans-serif;transform:scaleX(0.8464);transform-origin:0 0;">Экспресс-</div>
<div class="t" style="left:631.00px;top:126.14px;font-size:6.60px;font-weight:400;color:#a6a6a6;font-family:'Liberation Sans', sans-serif;transform:scaleX(0.8548);transform-origin:0 0;">стили</div>
<div class="t" style="left:666.80px;top:99.34px;font-size:6.60px;font-weight:400;color:#a6a6a6;font-family:'Liberation Sans', sans-serif;transform:scaleX(0.9563);transform-origin:0 0;">Заливка фигуры</div>
<div class="t" style="left:666.80px;top:111.14px;font-size:6.60px;font-weight:400;color:#a6a6a6;font-family:'Liberation Sans', sans-serif;transform:scaleX(0.9577);transform-origin:0 0;">Контур фигуры</div>
<div class="t" style="left:666.80px;top:122.74px;font-size:6.60px;font-weight:400;color:#a6a6a6;font-family:'Liberation Sans', sans-serif;transform:scaleX(0.8945);transform-origin:0 0;">Эффекты фигуры</div>
<div class="t" style="left:593.40px;top:135.86px;font-size:6.00px;font-weight:400;color:#383838;font-family:'Liberation Sans', sans-serif;transform:scaleX(0.9101);transform-origin:0 0;">Рисование</div>
<div class="t" style="left:744.00px;top:99.34px;font-size:6.60px;font-weight:400;color:#3c3c3c;font-family:'Liberation Sans', sans-serif;transform:scaleX(1.0088);transform-origin:0 0;">Найти</div>
<div class="t" style="left:744.00px;top:111.14px;font-size:6.60px;font-weight:400;color:#3c3c3c;font-family:'Liberation Sans', sans-serif;transform:scaleX(0.9946);transform-origin:0 0;">Заменить</div>
<div class="t" style="left:744.00px;top:122.74px;font-size:6.60px;font-weight:400;color:#3c3c3c;font-family:'Liberation Sans', sans-serif;transform:scaleX(0.8868);transform-origin:0 0;">Выделить</div>
<div class="t" style="left:737.00px;top:135.86px;font-size:6.00px;font-weight:400;color:#383838;font-family:'Liberation Sans', sans-serif;transform:scaleX(0.9189);transform-origin:0 0;">Редактирование</div>
<div class="t" style="left:12.00px;top:497.15px;font-size:6.20px;font-weight:400;color:#5c5c5c;font-family:'Liberation Sans', sans-serif;transform:scaleX(0.8852);transform-origin:0 0;">Слайд 1 из 16</div>
<div class="t" style="left:71.70px;top:497.15px;font-size:6.20px;font-weight:400;color:#5c5c5c;font-family:'Liberation Sans', sans-serif;transform:scaleX(0.9124);transform-origin:0 0;">русский</div>
<div class="t" style="left:581.00px;top:497.45px;font-size:6.20px;font-weight:400;color:#5c5c5c;font-family:'Liberation Sans', sans-serif;transform:scaleX(0.9699);transform-origin:0 0;">Заметки</div>
<div class="t" style="left:622.50px;top:497.45px;font-size:6.20px;font-weight:400;color:#5c5c5c;font-family:'Liberation Sans', sans-serif;transform:scaleX(0.9079);transform-origin:0 0;">Примечания</div>
<div class="t" style="left:811.00px;top:497.45px;font-size:6.20px;font-weight:400;color:#5c5c5c;font-family:'Liberation Sans', sans-serif;transform:scaleX(0.8762);transform-origin:0 0;">114 %</div>
<div class="t" style="left:9.70px;top:508.16px;font-size:8.60px;font-weight:400;color:#dedede;font-family:'Liberation Sans', sans-serif;transform:scaleX(0.9403);transform-origin:0 0;">Платформа МТС Линк</div>
<div class="t" style="left:14.50px;top:151.94px;font-size:8.45px;font-weight:400;color:#7a7a7a;font-family:'Liberation Sans', sans-serif;">1</div>
<div class="t" style="left:14.50px;top:214.94px;font-size:8.45px;font-weight:400;color:#7a7a7a;font-family:'Liberation Sans', sans-serif;">2</div>
<div class="t" style="left:14.50px;top:277.44px;font-size:8.45px;font-weight:400;color:#7a7a7a;font-family:'Liberation Sans', sans-serif;">3</div>
<div class="t" style="left:14.50px;top:339.44px;font-size:8.45px;font-weight:400;color:#7a7a7a;font-family:'Liberation Sans', sans-serif;">4</div>
<div class="t" style="left:14.50px;top:401.94px;font-size:8.45px;font-weight:400;color:#7a7a7a;font-family:'Liberation Sans', sans-serif;">5</div>
<div class="t" style="left:14.50px;top:463.44px;font-size:8.45px;font-weight:400;color:#7a7a7a;font-family:'Liberation Sans', sans-serif;">6</div>
<div class="t" style="left:258.50px;top:220.57px;font-size:19.40px;font-weight:700;color:#eba63a;font-family:'Liberation Sans', sans-serif;-webkit-text-stroke:0.25px #eba63a;">КАНАЛЫ ПОИСКА</div>
<div class="t" style="left:263.50px;top:241.57px;font-size:19.40px;font-weight:700;color:#eba63a;font-family:'Liberation Sans', sans-serif;-webkit-text-stroke:0.25px #eba63a;transform:scaleX(0.9733);transform-origin:0 0;">И ПРИВЛЕЧЕНИЯ</div>
<div class="t" style="left:278.30px;top:263.57px;font-size:19.40px;font-weight:700;color:#eba63a;font-family:'Liberation Sans', sans-serif;-webkit-text-stroke:0.25px #eba63a;transform:scaleX(0.9884);transform-origin:0 0;">ИНВЕСТИЦИЙ</div>
<div class="t" style="left:292.30px;top:285.57px;font-size:19.40px;font-weight:700;color:#eba63a;font-family:'Liberation Sans', sans-serif;-webkit-text-stroke:0.25px #eba63a;transform:scaleX(0.9735);transform-origin:0 0;">В СТАРТАП</div>
<div class="t" style="left:210.10px;top:316.96px;font-size:15.40px;font-weight:700;color:#7227d2;font-family:'Liberation Sans', sans-serif;-webkit-text-stroke:0.15px #7227d2;transform:scaleX(0.9651);transform-origin:0 0;">Изучим ключевые способы</div>
<div class="t" style="left:210.10px;top:333.46px;font-size:15.40px;font-weight:700;color:#7227d2;font-family:'Liberation Sans', sans-serif;-webkit-text-stroke:0.15px #7227d2;transform:scaleX(0.9787);transform-origin:0 0;">привлечения инвестиций и</div>
<div class="t" style="left:210.10px;top:349.56px;font-size:15.40px;font-weight:700;color:#7227d2;font-family:'Liberation Sans', sans-serif;-webkit-text-stroke:0.15px #7227d2;transform:scaleX(0.9625);transform-origin:0 0;">построения доверия с</div>
<div class="t" style="left:210.10px;top:366.46px;font-size:15.40px;font-weight:700;color:#7227d2;font-family:'Liberation Sans', sans-serif;-webkit-text-stroke:0.15px #7227d2;transform:scaleX(0.9703);transform-origin:0 0;">инвесторами.</div>
<div class="t" style="left:286.20px;top:454.75px;font-size:11.40px;font-weight:400;color:#d8735e;font-family:'Liberation Sans', sans-serif;-webkit-text-stroke:0.15px #d8735e;">Белгород 19.11.2025 г.</div>
<div class="t" style="left:224.50px;top:163.75px;font-size:20.60px;font-weight:700;color:#17603d;font-family:'Liberation Serif', serif;transform:scaleX(0.8075);transform-origin:0 0;">Б</div>
<div class="t" style="left:235.00px;top:167.35px;font-size:16.30px;font-weight:700;color:#17603d;font-family:'Liberation Serif', serif;transform:scaleX(1.0683);transform-origin:0 0;">ел</div>
<div class="t" style="left:237.50px;top:166.39px;font-size:7.30px;font-weight:400;color:#17603d;font-family:'Liberation Serif', serif;transform:scaleX(0.9229);transform-origin:0 0;">НИУ</div>
<div class="t" style="left:253.50px;top:163.75px;font-size:20.60px;font-weight:700;color:#17603d;font-family:'Liberation Serif', serif;transform:scaleX(0.8857);transform-origin:0 0;">ГУ</div>
<div class="t" style="left:225.00px;top:183.16px;font-size:6.50px;font-weight:400;color:#3f6a52;font-family:'Liberation Serif', serif;transform:scaleX(0.9465);transform-origin:0 0;">BELGOROD STATE</div>
<div class="t" style="left:225.00px;top:189.11px;font-size:6.80px;font-weight:400;color:#3f6a52;font-family:'Liberation Serif', serif;transform:scaleX(0.9000);transform-origin:0 0;">UNIVERSITY (BSU)</div>
<div class="t" style="left:663.20px;top:209.34px;font-size:6.45px;font-weight:400;color:#f8ecee;font-family:'Liberation Sans', sans-serif;transform:skewY(-15.6deg);transform-origin:0 0;-webkit-text-stroke:0.2px #f8ecee;">ПЛАТФОРМА</div>
<div class="t" style="left:663.20px;top:215.80px;font-size:6.26px;font-weight:400;color:#f8ecee;font-family:'Liberation Sans', sans-serif;transform:skewY(-15.6deg);transform-origin:0 0;-webkit-text-stroke:0.2px #f8ecee;">УНИВЕРСИТЕТСКОГО</div>
<div class="t" style="left:663.20px;top:222.08px;font-size:6.28px;font-weight:400;color:#f8ecee;font-family:'Liberation Sans', sans-serif;transform:skewY(-15.6deg);transform-origin:0 0;-webkit-text-stroke:0.2px #f8ecee;">ТЕХНОЛОГИЧЕСКОГО</div>
<div class="t" style="left:663.20px;top:228.26px;font-size:6.42px;font-weight:400;color:#f8ecee;font-family:'Liberation Sans', sans-serif;transform:skewY(-15.6deg);transform-origin:0 0;-webkit-text-stroke:0.2px #f8ecee;">ПРЕДПРИНИМАТЕЛЬСТВА</div>
</div></body></html>
